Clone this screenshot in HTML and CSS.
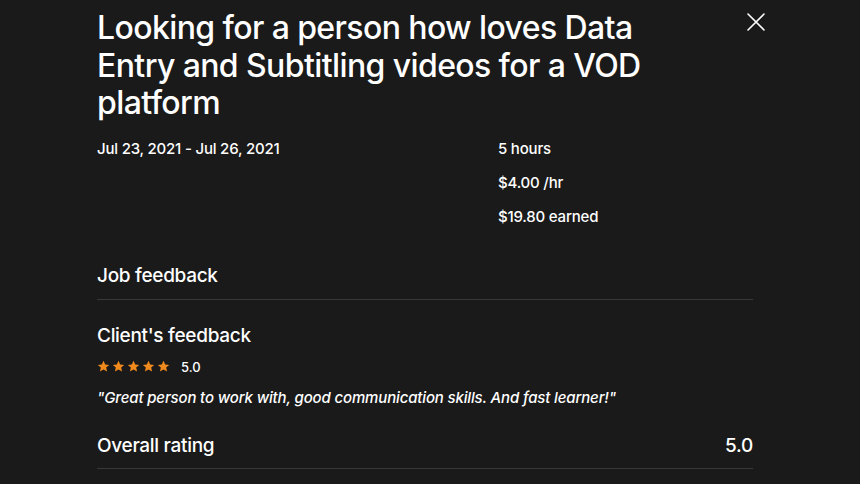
FILE: index.html
```html
<!DOCTYPE html>
<html lang="en">
<head>
    <meta charset="UTF-8">
    <title>Job details</title>
    <link rel="stylesheet" href="styles.css">
</head>
<body>
    <div class="modal">
        <button class="close-btn" aria-label="Close">
            <svg width="20" height="20" viewBox="0 0 20 20">
                <path d="M2 2 L18 18 M18 2 L2 18" stroke="#fff" stroke-width="1.6" stroke-linecap="round"/>
            </svg>
        </button>

        <div class="content">
            <h1 class="job-title">Looking for a person how loves Data Entry and Subtitling videos for a VOD platform</h1>

            <!-- 时间和收入 -->
            <div class="job-meta">
                <div class="meta-dates">Jul 23, 2021 - Jul 26, 2021</div>
                <div class="meta-stats">
                    <div>5 hours</div>
                    <div>$4.00 /hr</div>
                    <div>$19.80 earned</div>
                </div>
            </div>

            <div class="section-head">Job feedback</div>

            <div class="feedback">
                <div class="feedback-title">Client's feedback</div>
                <div class="rating">
                    <span class="stars">
                        <svg viewBox="0 0 24 24"><path d="M12 1.5l3.1 7 7.4.6-5.6 4.9 1.7 7.4L12 17.5l-6.6 3.9 1.7-7.4L1.5 9.1l7.4-.6z"/></svg>
                        <svg viewBox="0 0 24 24"><path d="M12 1.5l3.1 7 7.4.6-5.6 4.9 1.7 7.4L12 17.5l-6.6 3.9 1.7-7.4L1.5 9.1l7.4-.6z"/></svg>
                        <svg viewBox="0 0 24 24"><path d="M12 1.5l3.1 7 7.4.6-5.6 4.9 1.7 7.4L12 17.5l-6.6 3.9 1.7-7.4L1.5 9.1l7.4-.6z"/></svg>
                        <svg viewBox="0 0 24 24"><path d="M12 1.5l3.1 7 7.4.6-5.6 4.9 1.7 7.4L12 17.5l-6.6 3.9 1.7-7.4L1.5 9.1l7.4-.6z"/></svg>
                        <svg viewBox="0 0 24 24"><path d="M12 1.5l3.1 7 7.4.6-5.6 4.9 1.7 7.4L12 17.5l-6.6 3.9 1.7-7.4L1.5 9.1l7.4-.6z"/></svg>
                    </span>
                    <span class="rating-value">5.0</span>
                </div>
                <p class="quote">"Great person to work with, good communication skills. And fast learner!"</p>
            </div>

            <div class="overall">
                <span>Overall rating</span>
                <span>5.0</span>
            </div>
        </div>
    </div>
</body>
</html>
```

FILE: styles.css
```css
:root {
    --bg-color: #1a1a1a;
    --line-color: #383838;
    --star-color: #f08a1d;
}

body {
    margin: 0;
    height: 100vh;
    background: var(--bg-color);
    color: #fff;
    font-family: Inter, 'Liberation Sans', sans-serif;
    font-weight: 500;
    overflow: hidden;
}

.modal {
    position: relative;
    padding: 0 107px 0 97px;
}

.close-btn {
    position: absolute;
    top: 12px;
    right: 94px;
    background: none;
    border: none;
    padding: 0;
    cursor: pointer;
}

    .close-btn svg {
        display: block;
    }

.content {
    width: 656px;
}

/* 标题 */
.job-title {
    margin: 0;
    padding-top: 9px;
    width: 580px;
    font-size: 32px;
    font-weight: 500;
    line-height: 37.5px;
    letter-spacing: -0.6px;
}

.job-meta {
    display: grid;
    grid-template-columns: 401px 1fr;
    margin-top: 17px;
    font-size: 15px;
    letter-spacing: -0.2px;
}

.meta-stats {
    display: flex;
    flex-direction: column;
    gap: 15px;
}

.section-head {
    margin-top: 38px;
    padding-bottom: 12px;
    border-bottom: 1px solid var(--line-color);
    font-size: 19px;
    letter-spacing: -0.3px;
}

.feedback {
    padding-top: 24px;
}

.feedback-title {
    font-size: 19px;
    letter-spacing: -0.3px;
}

.rating {
    display: flex;
    align-items: center;
    gap: 11px;
    margin-top: 12px;
}

.stars {
    display: flex;
    gap: 2px;
}

    .stars svg {
        width: 13px;
        height: 13px;
        fill: var(--star-color);
    }

.rating-value {
    font-size: 13px;
}

.quote {
    margin: 13px 0 0;
    font-size: 15px;
    font-style: italic;
    letter-spacing: -0.15px;
}

.overall {
    display: flex;
    justify-content: space-between;
    margin-top: 27px;
    padding-bottom: 11px;
    border-bottom: 1px solid var(--line-color);
    font-size: 19px;
    letter-spacing: -0.3px;
}
```
